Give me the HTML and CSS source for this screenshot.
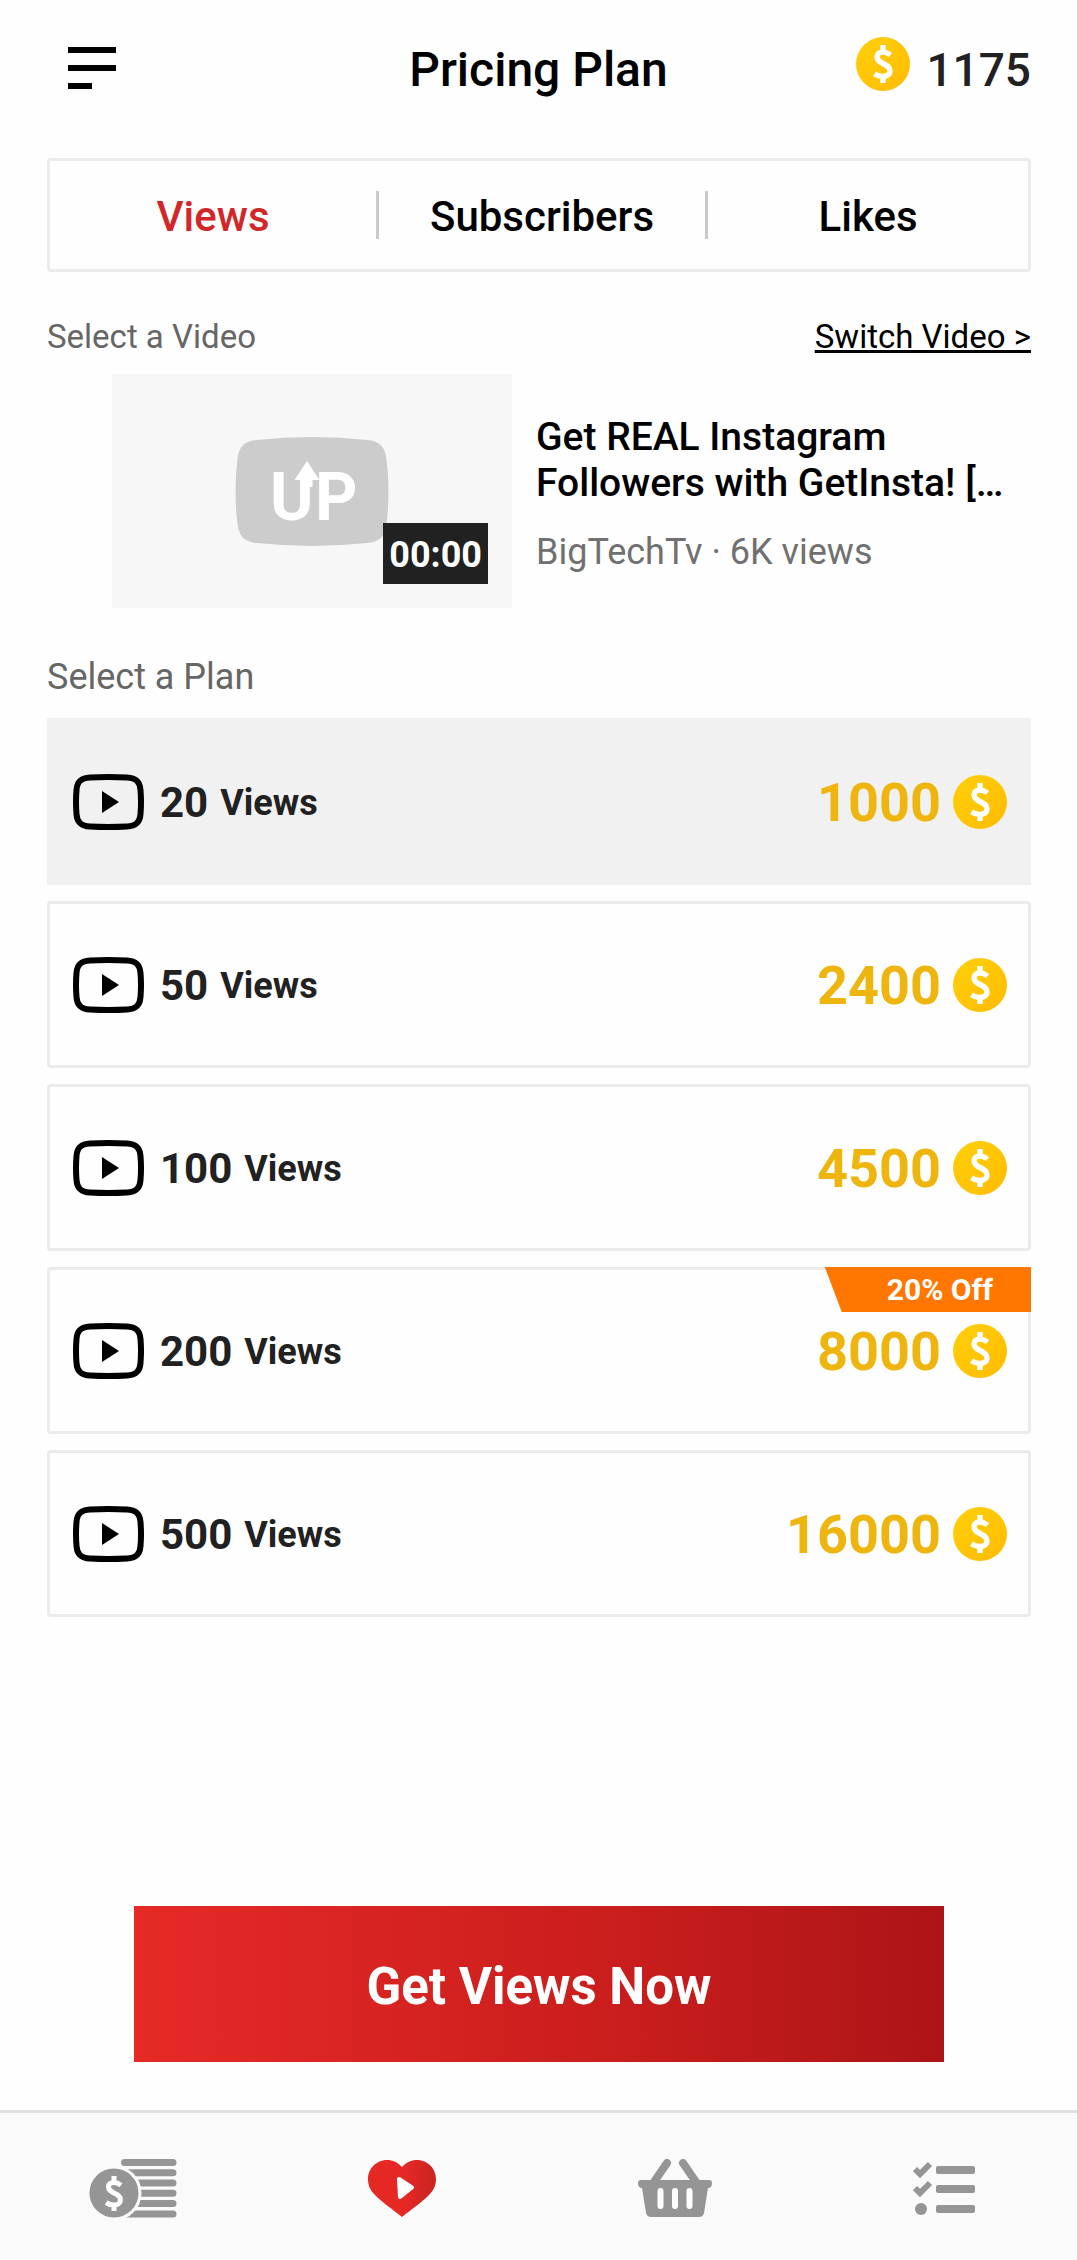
FILE: index.html
```html
<!DOCTYPE html>
<html lang="en">
<head>
<meta charset="utf-8">
<meta name="viewport" content="width=device-width, initial-scale=1">
<title>Pricing Plan</title>
<link rel="stylesheet" href="styles.css">
</head>
<body>
<svg class="defs" aria-hidden="true">
  <defs>
    <linearGradient id="gold" x1="0" y1="0" x2="1" y2="1">
      <stop offset="0" stop-color="#ffd00a"/><stop offset="1" stop-color="#ffbb02"/>
    </linearGradient>
    <symbol id="dollar" viewBox="0 0 20 40">
      <path d="M17.500 11C15 9 12.500 8 10 8C6.500 8 4 9.700 4 12.800C4 16.500 7 18 10.500 19.800C14 21.500 17 23 17 27C17 30.500 14 32.500 9.500 32.500C6.500 32.500 4 31.500 1.500 29.800M10 8V1M10 32.500V39" fill="none" stroke="#fff" stroke-width="5.400"/>
    </symbol>
    <symbol id="coin" viewBox="0 0 54 54">
      <circle cx="27" cy="27" r="27" fill="url(#gold)"/>
      <use href="#dollar" x="17" y="7" width="20" height="40"/>
    </symbol>
    <symbol id="play" viewBox="0 0 71 56">
      <path d="M17 3.500Q35.500 2.500 54 3.500C63 4 67 8 67.500 16Q68.500 28 67.500 40C67 48 63 52 54 52.500Q35.500 53.500 17 52.500C8 52 4 48 3.500 40Q2.500 28 3.500 16C4 8 8 4 17 3.500Z" fill="none" stroke="#000" stroke-width="6"/>
      <path d="M29 17L46 28L29 39Z"/>
    </symbol>
  </defs>
</svg>

<header class="topbar">
  <button class="menu" type="button" aria-label="Menu">
    <svg width="48" height="42" viewBox="0 0 48 42" aria-hidden="true"><path d="M0 0H48V6H0ZM0 18H48V24H0ZM0 36H24V42H0Z"/></svg>
  </button>
  <h1 class="title">Pricing Plan</h1>
  <div class="balance">
    <svg class="coin" aria-hidden="true"><use href="#coin"/></svg>
    <span>1175</span>
  </div>
</header>

<main class="content">
  <div class="tabs">
    <button class="tab tab-active" type="button">Views</button>
    <span class="divider"></span>
    <button class="tab" type="button">Subscribers</button>
    <span class="divider"></span>
    <button class="tab" type="button">Likes</button>
  </div>

  <div class="section-head">
    <h2 class="label">Select a Video</h2>
    <a class="switch" href="#switch">Switch Video &gt;</a>
  </div>

  <section class="video">
    <div class="thumb">
      <svg class="logo" width="154" height="109" viewBox="0 0 154 109" aria-hidden="true">
        <path d="M22 3Q77 -3 132 3C145 4 150 10 151.500 22Q155.500 54 151.500 87C150 99 145 105 132 106Q77 112 22 106C9 105 4 99 2.500 87Q-1.500 54 2.500 22C4 10 9 4 22 3Z" fill="#ccc"/>
        <text class="logo-text" x="35" y="83">U</text>
        <text class="logo-text" x="80" y="83">P</text>
        <path d="M72 24L84.500 43H77.500V50H67V43H59.500Z" fill="#fff"/>
      </svg>
      <span class="duration">00:00</span>
    </div>
    <div class="info">
      <h3 class="video-title">Get REAL Instagram Followers with GetInsta! […</h3>
      <p class="meta">BigTechTv · 6K views</p>
    </div>
  </section>

  <h2 class="label plan-label" id="plan-label">Select a Plan</h2>
  <div class="plans" role="radiogroup" aria-labelledby="plan-label">
    <label class="plan">
      <input class="plan-input" type="radio" name="plan" checked>
      <svg class="play" aria-hidden="true"><use href="#play"/></svg>
      <span class="count">20</span><span class="unit">Views</span>
      <span class="price">1000</span><svg class="coin" aria-hidden="true"><use href="#coin"/></svg>
    </label>
    <label class="plan">
      <input class="plan-input" type="radio" name="plan">
      <svg class="play" aria-hidden="true"><use href="#play"/></svg>
      <span class="count">50</span><span class="unit">Views</span>
      <span class="price">2400</span><svg class="coin" aria-hidden="true"><use href="#coin"/></svg>
    </label>
    <label class="plan">
      <input class="plan-input" type="radio" name="plan">
      <svg class="play" aria-hidden="true"><use href="#play"/></svg>
      <span class="count">100</span><span class="unit">Views</span>
      <span class="price">4500</span><svg class="coin" aria-hidden="true"><use href="#coin"/></svg>
    </label>
    <label class="plan">
      <input class="plan-input" type="radio" name="plan">
      <svg class="play" aria-hidden="true"><use href="#play"/></svg>
      <span class="count">200</span><span class="unit">Views</span>
      <span class="price">8000</span><svg class="coin" aria-hidden="true"><use href="#coin"/></svg>
      <span class="offer">20% Off</span>
    </label>
    <label class="plan">
      <input class="plan-input" type="radio" name="plan">
      <svg class="play" aria-hidden="true"><use href="#play"/></svg>
      <span class="count">500</span><span class="unit">Views</span>
      <span class="price">16000</span><svg class="coin" aria-hidden="true"><use href="#coin"/></svg>
    </label>
  </div>

  <button class="cta" type="button">Get Views Now</button>
</main>

<nav class="bottom-nav" aria-label="Main">
  <a class="nav-link" href="#coins" aria-label="Coins">
    <svg width="88" height="60" viewBox="0 0 88 60" aria-hidden="true">
      <path d="M35.500 4.500H84M35.500 14.700H84M35.500 25H84M35.500 35.300H84M35.500 45.600H84M35.500 55.900H84" stroke="#959595" stroke-width="7" stroke-linecap="round"/>
      <circle cx="25" cy="35" r="26" fill="#959595" stroke="#fafafa" stroke-width="3"/>
      <use href="#dollar" x="15" y="17" width="20" height="37"/>
    </svg>
  </a>
  <a class="nav-link" href="#promote" aria-label="Promote" aria-current="page">
    <svg width="68" height="58" viewBox="0 0 68 58" aria-hidden="true">
      <defs><linearGradient id="heart"><stop offset=".5" stop-color="#e62825"/><stop offset="1" stop-color="#cb2422"/></linearGradient></defs>
      <path d="M34 8C29 3 25 1 19 1C8 1 0 10 0 20C0 26 2 31 7 36C14 43 24 50 34 58C44 50 54 43 61 36C66 31 68 26 68 20C68 10 60 1 49 1C43 1 39 3 34 8Z" fill="url(#heart)"/>
      <path d="M31 20L44 28.500L32 38Z" fill="#fff" stroke="#fff" stroke-width="4" stroke-linejoin="round"/>
    </svg>
  </a>
  <a class="nav-link" href="#shop" aria-label="Shop">
    <svg width="74" height="58" viewBox="0 0 74 58" aria-hidden="true">
      <path d="M16 23L29 4M58 23L45 4" stroke="#959595" stroke-width="8" stroke-linecap="round"/>
      <path d="M3 21H71Q74 21 74 24Q74 29 70 29L66 54Q65 58 61 58H13Q9 58 8 54L4 29Q0 29 0 24Q0 21 3 21Z" fill="#959595"/>
      <path d="M22.500 32V47M37 32V47M51.500 32V47" stroke="#fff" stroke-width="6" stroke-linecap="round"/>
    </svg>
  </a>
  <a class="nav-link" href="#tasks" aria-label="Tasks">
    <svg width="62" height="54" viewBox="0 0 62 54" aria-hidden="true">
      <path d="M2 8L7 13L17 3M2 27L7 32L17 22" fill="none" stroke="#959595" stroke-width="6"/>
      <circle cx="8" cy="48" r="6" fill="#959595"/>
      <path d="M25 5H60Q62 5 62 7V11Q62 13 60 13H25Q23 13 23 11V7Q23 5 25 5ZM25 24H60Q62 24 62 26V30Q62 32 60 32H25Q23 32 23 30V26Q23 24 25 24ZM25 44H60Q62 44 62 46V50Q62 52 60 52H25Q23 52 23 50V46Q23 44 25 44Z" fill="#959595"/>
    </svg>
  </a>
</nav>
</body>
</html>
```

FILE: styles.css
```css
*, *::before, *::after {
  box-sizing: border-box;
}

body {
  margin: 0;
  min-height: 100vh;
  display: flex;
  flex-direction: column;
  background: #fefefe;
  color: #000;
  font-family: Roboto, "Liberation Sans", sans-serif;
}

h1, h2, h3, p {
  margin: 0;
  font-weight: 400;
}

button {
  border: 0;
  padding: 0;
  background: none;
  color: inherit;
  font: inherit;
}

.defs {
  position: absolute;
  width: 0;
  height: 0;
}

.coin {
  width: 54px;
  height: 54px;
  flex: none;
}

.topbar {
  display: grid;
  grid-template-columns: 1fr auto 1fr;
  align-items: start;
  padding: 37px 46px 55px 68px;
}

.menu {
  justify-self: start;
  display: flex;
  align-items: center;
  height: 62px;
}

.title {
  font-size: 48px;
  font-weight: 500;
  line-height: 66px;
  margin-right: 22px;
}

.balance {
  justify-self: end;
  display: flex;
  gap: 16px;
  color: #212121;
  font-size: 46px;
  font-weight: 500;
  line-height: 66px;
}

.content {
  flex: 1;
  display: flex;
  flex-direction: column;
  padding: 0 46px 48px 47px;
}

.tabs {
  display: grid;
  grid-template-columns: 326fr 3px 326fr 3px 320fr;
  align-items: center;
  border: 3px solid #ebebeb;
  border-radius: 4px;
}

.tab {
  padding-top: 4px;
  font-size: 42px;
  font-weight: 500;
  line-height: 104px;
}

.tab-active {
  color: #d22728;
}

.divider {
  height: 48px;
  background: #cacaca;
}

.section-head {
  display: flex;
  justify-content: space-between;
  margin: 42px 0 14px;
  font-size: 33px;
  line-height: 46px;
}

.label {
  color: #666;
  font-size: inherit;
}

.switch {
  color: #000;
  text-decoration: underline;
}

.video {
  display: flex;
  gap: 24px;
  padding-left: 65px;
}

.thumb {
  position: relative;
  flex: none;
  display: flex;
  align-items: center;
  justify-content: center;
  width: 400px;
  height: 234px;
  background: #f7f7f7;
}

.logo-text {
  fill: #fff;
  font-size: 66px;
  font-weight: 700;
}

.duration {
  position: absolute;
  right: 24px;
  bottom: 24px;
  padding: 4px 6px 0;
  background: #212121;
  color: #fff;
  font-size: 36px;
  font-weight: 700;
  line-height: 57px;
}

.info {
  padding-top: 40px;
}

.video-title {
  font-size: 39px;
  font-weight: 500;
  line-height: 46px;
}

.meta {
  margin-top: 23px;
  color: #707070;
  font-size: 36px;
  line-height: 46px;
}

.plan-label {
  margin: 46px 0 18px;
  font-size: 36px;
  line-height: 46px;
}

.plans {
  display: grid;
  gap: 16px;
}

.plan {
  position: relative;
  display: flex;
  align-items: center;
  height: 167px;
  padding: 0 21px 0 23px;
  border: 3px solid #ebebeb;
  border-radius: 4px;
  color: #212121;
}

.plan:has(.plan-input:checked) {
  background: #f1f1f1;
  border-color: #f1f1f1;
  border-radius: 0;
}

.plan-input {
  position: absolute;
  opacity: 0;
  margin: 0;
}

.play {
  width: 71px;
  height: 56px;
  margin-right: 16px;
}

.count {
  margin-right: 12px;
  padding-top: 2px;
  font-size: 42px;
  font-weight: 700;
}

.unit {
  padding-top: 2px;
  font-size: 36px;
  font-weight: 700;
}

.price {
  margin: 0 12px 0 auto;
  padding-top: 2px;
  color: #edb50e;
  font-size: 54px;
  font-weight: 700;
}

.offer {
  position: absolute;
  top: -3px;
  right: -3px;
  padding: 0 38px 0 62px;
  background: #ff7601;
  clip-path: polygon(0 0, 100% 0, 100% 100%, 17px 100%);
  color: #fff;
  font-size: 30px;
  font-weight: 700;
  line-height: 45px;
}

.cta {
  margin: auto 87px 0;
  padding-top: 6px;
  background: linear-gradient(to right, #e62a26, #c91e1d 60%, #ad1417);
  color: #fff;
  font-size: 51px;
  font-weight: 700;
  line-height: 150px;
}

.bottom-nav {
  display: grid;
  grid-template-columns: 265fr 273fr 273fr 266fr;
  height: 150px;
  padding-top: 2px;
  border-top: 3px solid #dedfdf;
  background: #fafafa;
}

.nav-link {
  display: flex;
  align-items: center;
  justify-content: center;
}
```
